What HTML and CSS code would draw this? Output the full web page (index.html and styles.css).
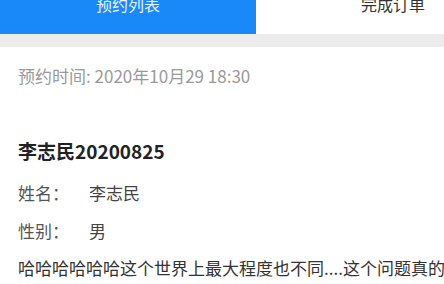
FILE: index.html
```html
<!DOCTYPE html>
<html lang="zh-CN">
<head>
    <meta charset="UTF-8">
    <title>预约列表</title>
    <link rel="stylesheet" href="styles.css">
</head>
<body>
    <div class="tabs">
        <div class="tab active"><span class="tab-label">预约列表</span></div>
        <div class="tab"><span class="tab-label">完成订单</span></div>
    </div>
    <div class="gap"></div>

    <div class="card">
        <div class="time">预约时间: 2020年10月29 18:30</div>
        <div class="title">李志民20200825</div>
        <div class="row"><span class="label">姓名：</span><span>李志民</span></div>
        <div class="row"><span class="label">性别：</span><span>男</span></div>
        <div class="desc">哈哈哈哈哈哈这个世界上最大程度也不同....这个问题真的是太难了</div>
    </div>
</body>
</html>
```
FILE: styles.css
```css
html, body {
    margin: 0;
    padding: 0;
    background: #fff;
    overflow: hidden;
}
body {
    font-family: "Noto Sans CJK SC", "Noto Sans", sans-serif;
    width: 444px;
    height: 284px;
}
.tabs {
    display: flex;
    height: 34px;
    overflow: hidden;
    background: #fff;
}
.tab {
    flex: 0 0 256px;
    text-align: center;
    font-size: 16px;
    color: #333;
}
.tab.active {
    background: #1989fa;
    color: #e8f2ff;
}
.tab-label {
    display: block;
    line-height: 17px;
    margin-top: -4px;
}
.tab:not(.active) .tab-label {
    margin-left: 18px;
}
.gap {
    height: 13px;
    background: #ececec;
}
.card {
    padding: 0 18px;
    white-space: nowrap;
}
.time {
    margin-top: 17px;
    font-size: 17px;
    line-height: 24px;
    color: #9a9a9a;
}
.title {
    margin-top: 50px;
    font-size: 19px;
    line-height: 26px;
    font-weight: bold;
    color: #222;
}
.row {
    margin-top: 17px;
    font-size: 17px;
    line-height: 24px;
    color: #444;
}
.row + .row {
    margin-top: 14px;
}
.label {
    display: inline-block;
    width: 71px;
    color: #555;
}
.desc {
    margin-top: 13px;
    font-size: 17px;
    line-height: 24px;
    color: #333;
}
```
